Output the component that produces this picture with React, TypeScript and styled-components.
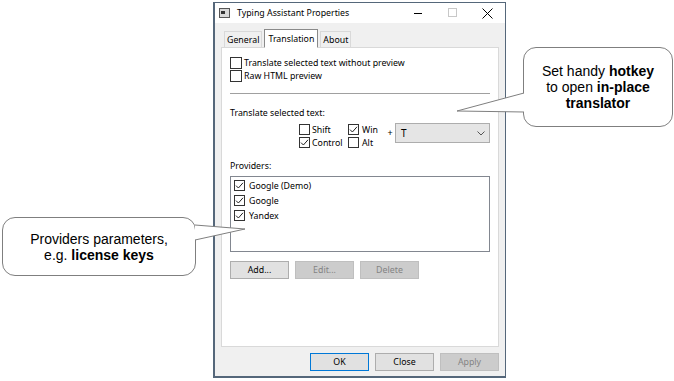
import React from "react";
import styled, { createGlobalStyle } from "styled-components";

const Global = createGlobalStyle`
  html, body { margin: 0; padding: 0; background: #ffffff; }
  body { width: 674px; height: 381px; overflow: hidden; font-family: "Noto Sans", "Liberation Sans", sans-serif; }
`;

const Stage = styled.div`
  position: relative;
  width: 674px;
  height: 381px;
  padding: 2px 0 0 213px;
  box-sizing: border-box;
`;

const Window = styled.div`
  width: 293px;
  height: 376px;
  box-sizing: border-box;
  border: 1px solid #55677a;
  border-left-width: 2px;
  border-bottom-width: 2px;
  background: #f0f0f0;
  display: flex;
  flex-direction: column;
  font-size: 8.8px;
  line-height: 12px;
  color: #000;
`;

const TitleBar = styled.div`
  height: 20px;
  background: #ffffff;
  display: flex;
  align-items: center;
  padding-left: 4px;
  flex: none;
`;

const AppIcon = styled.div`
  width: 9px;
  height: 8px;
  border: 1px solid #555;
  background: #d8d8d8;
  margin-right: 7px;
  position: relative;
  &::after {
    content: "";
    position: absolute;
    left: 1px; top: 2px; width: 4px; height: 3px; background: #333;
  }
`;

const Title = styled.div`
  flex: 1;
  font-size: 8.8px;
  color: #000;
`;

const Controls = styled.div`
  display: flex;
  align-items: center;
`;

const Ctrl = styled.div`
  width: 35px;
  height: 20px;
  display: flex;
  align-items: center;
  justify-content: center;
`;

const Body = styled.div`
  flex: 1;
  display: flex;
  flex-direction: column;
  padding: 6px 6px 0 6px;
`;

const TabRow = styled.div`
  display: flex;
  align-items: flex-end;
  height: 18px;
  padding-left: 3px;
  position: relative;
  z-index: 1;
`;

const Tab = styled.div<{ $active?: boolean }>`
  box-sizing: border-box;
  height: ${(p) => (p.$active ? "19px" : "16px")};
  padding: 0 ${(p) => (p.$active ? "3px" : "2px")};
  display: flex;
  align-items: center;
  border: 1px solid ${(p) => (p.$active ? "#8a8a8a" : "#d9d9d9")};
  border-bottom: ${(p) => (p.$active ? "1px solid #ffffff" : "none")};
  background: ${(p) => (p.$active ? "#ffffff" : "#f0f0f0")};
  margin: ${(p) => (p.$active ? "0 2px -1px 2px" : "0")};
`;

const Panel = styled.div`
  height: 300px;
  box-sizing: border-box;
  background: #ffffff;
  border: 1px solid #d9d9d9;
  padding: 8px 8px 0 8px;
  display: flex;
  flex-direction: column;
`;

const CheckRow = styled.label<{ $gap: number }>`
  display: flex;
  align-items: center;
  height: 13px;
  gap: ${(p) => p.$gap}px;
  white-space: nowrap;
`;

const Box = styled.span<{ $small?: boolean }>`
  box-sizing: border-box;
  width: ${(p) => (p.$small ? "11px" : "12px")};
  height: ${(p) => (p.$small ? "11px" : "12px")};
  border: 1px solid #333333;
  background: #fff;
  display: inline-flex;
  align-items: center;
  justify-content: center;
  flex: none;
`;

const Separator = styled.div`
  height: 1px;
  background: #a0a0a0;
  margin: 11px 0 12px 0;
`;

const Label = styled.div<{ $mt?: number }>`
  height: 13px;
  display: flex;
  align-items: center;
  margin-top: ${(p) => p.$mt ?? 0}px;
`;

const HotkeyRow = styled.div`
  display: flex;
  align-items: flex-start;
  margin: 4px 0 0 69px;
`;

const ModGrid = styled.div`
  display: grid;
  grid-template-columns: 49px 38px;
`;

const Plus = styled.span`
  width: 8px;
  font-size: 9px;
  text-align: center;
  margin: 4px 1px 0 0;
`;

const Combo = styled.div`
  width: 95px;
  height: 20px;
  box-sizing: border-box;
  border: 1px solid #adadad;
  background: #e5e5e5;
  display: flex;
  align-items: center;
  justify-content: space-between;
  padding: 0 4px 0 5px;
  font-size: 10px;
`;

const ListBox = styled.div`
  height: 76px;
  box-sizing: border-box;
  border: 1px solid #828790;
  padding: 2px 3px;
  display: flex;
  flex-direction: column;
  gap: 2px;
  margin-top: 4px;
`;

const ButtonRow = styled.div<{ $end?: boolean; $mt?: number }>`
  display: flex;
  gap: 6px;
  justify-content: ${(p) => (p.$end ? "flex-end" : "flex-start")};
  margin-top: ${(p) => p.$mt ?? 0}px;
`;

const Button = styled.div<{ $disabled?: boolean; $default?: boolean }>`
  width: 59px;
  height: 18px;
  box-sizing: border-box;
  border: 1px solid ${(p) => (p.$default ? "#0078d7" : p.$disabled ? "#bfbfbf" : "#adadad")};
  background: ${(p) => (p.$disabled ? "#cccccc" : "#e1e1e1")};
  color: ${(p) => (p.$disabled ? "#838383" : "#000")};
  display: flex;
  align-items: center;
  justify-content: center;
`;

const Footer = styled.div`
  padding: 6px 0 0 0;
`;

const Callout = styled.div<{ $x: number; $y: number; $w: number; $h: number }>`
  position: absolute;
  left: ${(p) => p.$x}px;
  top: ${(p) => p.$y}px;
  width: ${(p) => p.$w}px;
  height: ${(p) => p.$h}px;
  box-sizing: border-box;
  border: 1px solid #7f7f7f;
  border-radius: 13px;
  background: #fff;
  display: flex;
  flex-direction: column;
  align-items: center;
  justify-content: center;
  font-family: "Liberation Sans", Arial, sans-serif;
  font-size: 14px;
  line-height: 16px;
  color: #000;
  text-align: center;
  z-index: 3;
`;

const Tail = styled.svg`
  position: absolute;
  left: 0;
  top: 0;
  z-index: 4;
  pointer-events: none;
`;

const Check = () => (
  <svg width="9" height="9" viewBox="0 0 9 9">
    <path d="M1 4.6 L3.4 7 L8 1.8" fill="none" stroke="#222" strokeWidth="1" />
  </svg>
);

const CB = ({ checked, label, small, gap = 2 }: { checked?: boolean; label: string; small?: boolean; gap?: number }) => (
  <CheckRow $gap={gap}>
    <Box $small={small}>{checked && <Check />}</Box>
    <span>{label}</span>
  </CheckRow>
);

export default function App() {
  return (
    <>
      <Global />
      <Stage>
        <Window>
          <TitleBar>
            <AppIcon />
            <Title>Typing Assistant Properties</Title>
            <Controls>
              <Ctrl>
                <svg width="10" height="10" viewBox="0 0 10 10">
                  <path d="M1 5.5 H9" stroke="#000" strokeWidth="1" />
                </svg>
              </Ctrl>
              <Ctrl>
                <svg width="10" height="10" viewBox="0 0 10 10">
                  <rect x="0.5" y="0.5" width="8" height="8" fill="none" stroke="#c8c8c8" />
                </svg>
              </Ctrl>
              <Ctrl>
                <svg width="11" height="11" viewBox="0 0 11 11">
                  <path d="M0.5 0.5 L10.5 10.5 M10.5 0.5 L0.5 10.5" stroke="#000" strokeWidth="1" />
                </svg>
              </Ctrl>
            </Controls>
          </TitleBar>
          <Body>
            <TabRow>
              <Tab>General</Tab>
              <Tab $active>Translation</Tab>
              <Tab>About</Tab>
            </TabRow>
            <Panel>
              <CB label="Translate selected text without preview" />
              <CB label="Raw HTML preview" />
              <Separator />
              <Label>Translate selected text:</Label>
              <HotkeyRow>
                <ModGrid>
                  <CB label="Shift" small gap={2} />
                  <CB label="Win" checked small gap={3} />
                  <CB label="Control" checked small gap={2} />
                  <CB label="Alt" small gap={3} />
                </ModGrid>
                <Plus>+</Plus>
                <Combo>
                  <span>T</span>
                  <svg width="8" height="5" viewBox="0 0 8 5">
                    <path d="M0.5 0.5 L4 4 L7.5 0.5" fill="none" stroke="#555" strokeWidth="1" />
                  </svg>
                </Combo>
              </HotkeyRow>
              <Label $mt={10}>Providers:</Label>
              <ListBox>
                <CB label="Google (Demo)" checked small gap={4} />
                <CB label="Google" checked small gap={4} />
                <CB label="Yandex" checked small gap={4} />
              </ListBox>
              <ButtonRow $mt={9}>
                <Button>Add...</Button>
                <Button $disabled>Edit...</Button>
                <Button $disabled>Delete</Button>
              </ButtonRow>
            </Panel>
            <Footer>
              <ButtonRow $end>
                <Button $default>OK</Button>
                <Button>Close</Button>
                <Button $disabled>Apply</Button>
              </ButtonRow>
            </Footer>
          </Body>
        </Window>

        <Callout $x={523} $y={47} $w={150} $h={80}>
          <div>Set handy <b>hotkey</b></div>
          <div>to open <b>in-place</b></div>
          <div><b>translator</b></div>
        </Callout>
        <Callout $x={2} $y={217} $w={194} $h={59}>
          <div>Providers parameters,</div>
          <div>e.g. <b>license keys</b></div>
        </Callout>
        <Tail width="674" height="381">
          <polygon points="524,93 457,111 524,112" fill="#fff" stroke="none" />
          <polyline points="524,93 457,111 524,112" fill="none" stroke="#7f7f7f" strokeWidth="1" />
          <polygon points="195,225 245,229 195,240" fill="#fff" stroke="none" />
          <polyline points="195,225 245,229 195,240" fill="none" stroke="#7f7f7f" strokeWidth="1" />
        </Tail>
      </Stage>
    </>
  );
}
